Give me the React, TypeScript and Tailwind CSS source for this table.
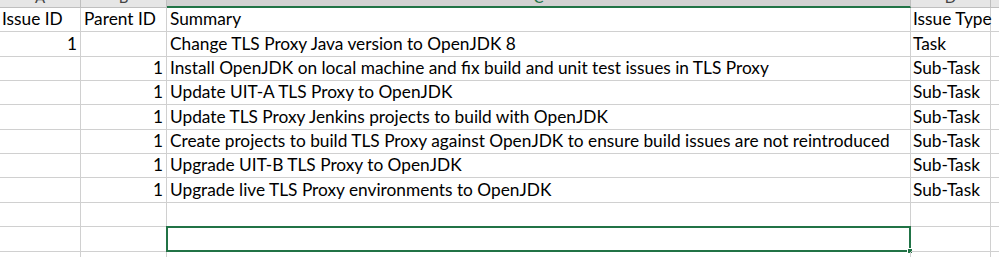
import React from 'react';

type Row = {
  issueId?: string;
  parentId?: string;
  summary?: string;
  type?: string;
  h: string;
  selected?: boolean;
};

const rows: Row[] = [
  { issueId: 'Issue ID', parentId: 'Parent ID', summary: 'Summary', type: 'Issue Type', h: 'h-[24px]' },
  { issueId: '1', summary: 'Change TLS Proxy Java version to OpenJDK 8', type: 'Task', h: 'h-[25px]' },
  { parentId: '1', summary: 'Install OpenJDK on local machine and fix build and unit test issues in TLS Proxy', type: 'Sub-Task', h: 'h-[24px]' },
  { parentId: '1', summary: 'Update UIT-A TLS Proxy to OpenJDK', type: 'Sub-Task', h: 'h-[24px]' },
  { parentId: '1', summary: 'Update TLS Proxy Jenkins projects to build with OpenJDK', type: 'Sub-Task', h: 'h-[25px]' },
  { parentId: '1', summary: 'Create projects to build TLS Proxy against OpenJDK to ensure build issues are not reintroduced', type: 'Sub-Task', h: 'h-[24px]' },
  { parentId: '1', summary: 'Upgrade UIT-B TLS Proxy to OpenJDK', type: 'Sub-Task', h: 'h-[24px]' },
  { parentId: '1', summary: 'Upgrade live TLS Proxy environments to OpenJDK', type: 'Sub-Task', h: 'h-[25px]' },
  { h: 'h-[24px]' },
  { h: 'h-[25px]', selected: true },
  { h: 'h-[24px]' },
];

const cell = 'border-r border-b border-[#d0d0d0] flex items-end pb-[2px] whitespace-nowrap';
const colHead = 'bg-[#e6e6e6] border-r border-b border-[#bfbfbf] flex justify-center items-start overflow-hidden';

export default function App() {
  return (
    <div className="w-[999px] h-[257px] overflow-hidden bg-white text-black text-[17.3px] leading-[20px] font-['Lato','Open_Sans',sans-serif]">
      {/* column header strip, mostly scrolled out of view */}
      <div className="flex h-[8px] overflow-hidden text-[#444] text-[15px] leading-[20px]">
        <div className={`${colHead} w-[81px]`}>
          <span className="-mt-[13px]">A</span>
        </div>
        <div className={`${colHead} w-[86px]`}>
          <span className="-mt-[13px]">B</span>
        </div>
        <div className="w-[744px] bg-[#d2d2d2] border-r border-[#bfbfbf] border-b-2 border-b-[#217346] flex justify-center items-start overflow-hidden">
          <span className="-mt-[13px] text-[#217346]">C</span>
        </div>
        <div className={`${colHead} w-[80px]`}>
          <span className="-mt-[13px]">D</span>
        </div>
        <div className="flex-1 bg-[#e6e6e6] border-b border-[#bfbfbf]" />
      </div>

      {rows.map((r, i) => (
        <div key={i} className={`flex ${r.h}`}>
          <div className={`${cell} overflow-hidden w-[81px] ${i === 0 ? 'justify-start pl-[2px]' : 'justify-end pr-[3px]'}`}>{r.issueId}</div>
          <div className={`${cell} overflow-hidden w-[86px] ${i === 0 ? 'justify-start pl-[3px]' : 'justify-end pr-[3px]'}`}>{r.parentId}</div>
          <div className={`${cell} w-[744px] pl-[3px] relative`}>
            {r.summary}
            {r.selected && (
              <div className="absolute -left-px -top-px right-[-1px] bottom-[-1px] border-2 border-[#217346]">
                <div className="absolute -right-[4px] -bottom-[4px] w-[6px] h-[6px] bg-[#217346] border border-white" />
              </div>
            )}
          </div>
          <div className={`${cell} w-[80px] pl-[2px] relative z-10`}>{r.type}</div>
          <div className="flex-1 border-b border-[#d0d0d0]" />
        </div>
      ))}
    </div>
  );
}
